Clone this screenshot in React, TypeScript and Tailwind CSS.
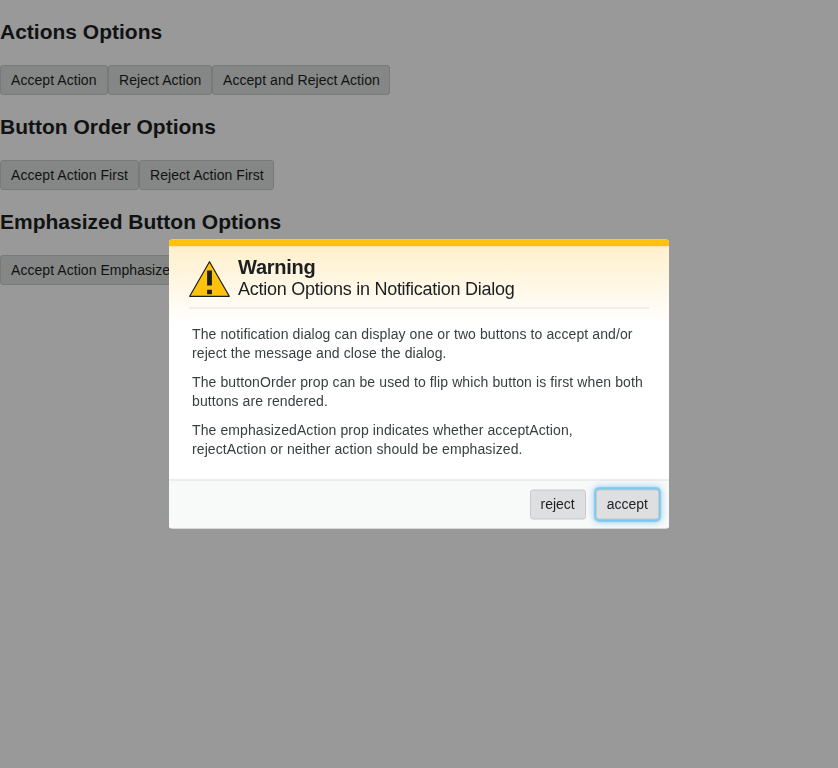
import React from "react";

function Button({ children, className = "" }: { children: React.ReactNode; className?: string }) {
  return (
    <button className={`h-[30px] shrink-0 whitespace-nowrap rounded-[3px] border border-[#c8cacb] bg-[#dedfe0] px-[10px] text-[14px] leading-[16px] text-[#1c1f21] ${className}`}>
      {children}
    </button>
  );
}

interface Action {
  label: string;
  width: string;
}

function Section({ title, actions }: { title: string; actions: Action[] }) {
  return (
    <section className="h-[95px]">
      <h2 className="h-[45px] text-[21px] leading-[24px] font-bold text-[#1c1f21]">{title}</h2>
      <div className="flex">
        {actions.map((a) => (
          <Button key={a.label} className={`text-left tracking-[0.05px] ${a.width}`}>{a.label}</Button>
        ))}
      </div>
    </section>
  );
}

export default function App() {
  return (
    <main className="relative h-screen overflow-hidden bg-white pt-5 font-['Liberation_Sans',Arial,sans-serif]">
      <Section
        title="Actions Options"
        actions={[
          { label: "Accept Action", width: "w-[108px]" },
          { label: "Reject Action", width: "w-[104px]" },
          { label: "Accept and Reject Action", width: "w-[178px]" },
        ]}
      />
      <Section
        title="Button Order Options"
        actions={[
          { label: "Accept Action First", width: "w-[139px]" },
          { label: "Reject Action First", width: "w-[135px]" },
        ]}
      />
      <Section title="Emphasized Button Options" actions={[{ label: "Accept Action Emphasized", width: "w-[190px]" }]} />
      <div className="fixed inset-0 flex items-start justify-center bg-black/40 pt-[239px]">
        <div className="flex h-[289px] w-[500px] translate-y-[0.5px] flex-col overflow-hidden rounded-[3px] bg-white">
          <div className="h-[7px] shrink-0 bg-[#ffc20a]" />
          <div className="h-[78px] shrink-0 bg-gradient-to-b from-[#fff0cc] to-white px-5">
            <header className="flex h-[62px] border-b border-[#dedfe0] pt-[8px]">
              <svg className="mt-[6px] mr-2 h-[37px] w-[41px] shrink-0" viewBox="0 0 41 37">
                <path d="M20.5 1.2 40.3 35.8H.7Z" fill="#ffc20a" stroke="#1c1f21" strokeWidth="1.2" strokeLinejoin="round" />
                <path d="M18.1 10h4.8v15h-4.8zM18.1 29.3h4.8v4.5h-4.8z" fill="#1c1f21" />
              </svg>
              <div className="text-[#1c1f21]">
                <h1 className="text-[20px] leading-[24px] font-bold tracking-[-0.25px]">Warning</h1>
                <h2 className="text-[18px] leading-[20px] tracking-[-0.26px]">Action Options in Notification Dialog</h2>
              </div>
            </header>
          </div>
          <div className="flex-1 px-[23px] text-[14px] leading-[19px] tracking-[0.1px] text-[#383f42]">
            <p className="mb-[10px]">The notification dialog can display one or two buttons to accept and/or<br />reject the message and close the dialog.</p>
            <p className="mb-[10px]">The buttonOrder prop can be used to flip which button is first when both<br />buttons are rendered.</p>
            <p>The emphasizedAction prop indicates whether acceptAction,<br />rejectAction or neither action should be emphasized.</p>
          </div>
          <footer className="flex h-[49px] shrink-0 items-start justify-end gap-[10px] border-t border-[#dedfe0] bg-[#f8f9f9] pt-[9px] pr-[10px]">
            <Button className="pb-[2px]">reject</Button>
            <Button className="pb-[2px] shadow-[0_0_1px_2px_rgba(76,178,233,0.5),0_0_7px_2px_rgba(76,178,233,0.6)]">accept</Button>
          </footer>
        </div>
      </div>
    </main>
  );
}
